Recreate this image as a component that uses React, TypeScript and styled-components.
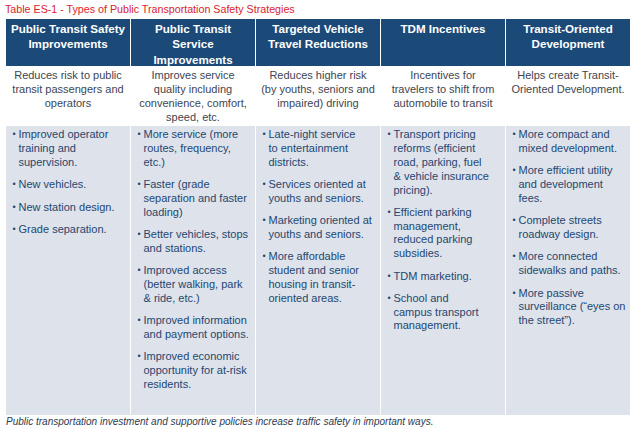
import React from "react";
import styled, { createGlobalStyle } from "styled-components";

const Global = createGlobalStyle`
  html, body { margin: 0; padding: 0; background: #ffffff; }
  body { font-family: "Liberation Sans", Arial, sans-serif; }
`;

const Page = styled.div`
  width: 640px;
  height: 429px;
  padding: 0 6px;
  box-sizing: border-box;
  overflow: hidden;
`;

const Title = styled.div`
  padding-top: 2px;
  margin-left: -1px;
  font-size: 10.7px;
  line-height: 14px;
  color: #d8242c;
  white-space: nowrap;
`;

const Table = styled.div`
  margin-top: 3px;
  display: grid;
  grid-template-columns: repeat(5, 1fr);
  grid-template-rows: 47px 60px 289px;
  column-gap: 1px;
  width: 624px;
  background: #ffffff;
`;

const HeadCell = styled.div`
  background: #1c4a78;
  color: #ffffff;
  font-weight: bold;
  font-size: 11.6px;
  line-height: 15.5px;
  text-align: center;
  padding-top: 1.5px;
  white-space: nowrap;
`;

const DescCell = styled.div`
  background: #ffffff;
  color: #3e4552;
  font-size: 11px;
  line-height: 13.7px;
  text-align: center;
  padding-top: 3.4px;
  white-space: nowrap;
`;

const BodyCell = styled.div`
  background: #dee2eb;
  padding: 2.4px 4px 0 6.5px;
  display: flex;
  flex-direction: column;
  gap: 8.5px;
`;

const Item = styled.div`
  display: flex;
  color: #24476f;
  font-size: 11px;
  line-height: 13.8px;
  white-space: nowrap;
`;

const Dot = styled.span`
  flex: 0 0 6px;
  font-size: 9px;
`;

const Footer = styled.div`
  margin-top: 1px;
  font-style: italic;
  font-size: 10px;
  line-height: 12px;
  color: #2d3a52;
  white-space: nowrap;
`;

const Lines: React.FC<{ lines: string[] }> = ({ lines }) => (
  <>
    {lines.map((l, i) => (
      <React.Fragment key={i}>
        {i > 0 && <br />}
        {l}
      </React.Fragment>
    ))}
  </>
);

const heads: string[][] = [
  ["Public Transit Safety", "Improvements"],
  ["Public Transit", "Service", "Improvements"],
  ["Targeted Vehicle", "Travel Reductions"],
  ["TDM Incentives"],
  ["Transit-Oriented", "Development"],
];

const descs: string[][] = [
  ["Reduces risk to public", "transit passengers and", "operators"],
  ["Improves service", "quality including", "convenience, comfort,", "speed, etc."],
  ["Reduces higher risk", "(by youths, seniors and", "impaired) driving"],
  ["Incentives for", "travelers to shift from", "automobile to transit"],
  ["Helps create Transit-", "Oriented Development."],
];

const bullets: string[][][] = [
  [
    ["Improved operator", "training and", "supervision."],
    ["New vehicles."],
    ["New station design."],
    ["Grade separation."],
  ],
  [
    ["More service (more", "routes, frequency,", "etc.)"],
    ["Faster (grade", "separation and faster", "loading)"],
    ["Better vehicles, stops", "and stations."],
    ["Improved access", "(better walking, park", "& ride, etc.)"],
    ["Improved information", "and payment options."],
    ["Improved economic", "opportunity for at-risk", "residents."],
  ],
  [
    ["Late-night service", "to entertainment", "districts."],
    ["Services oriented at", "youths and seniors."],
    ["Marketing oriented at", "youths and seniors."],
    ["More affordable", "student and senior", "housing in transit-", "oriented areas."],
  ],
  [
    ["Transport pricing", "reforms (efficient", "road, parking, fuel", "& vehicle insurance", "pricing)."],
    ["Efficient parking", "management,", "reduced parking", "subsidies."],
    ["TDM marketing."],
    ["School and", "campus transport", "management."],
  ],
  [
    ["More compact and", "mixed development."],
    ["More efficient utility", "and development", "fees."],
    ["Complete streets", "roadway design."],
    ["More connected", "sidewalks and paths."],
    ["More passive", "surveillance (\u201Ceyes on", "the street\u201D)."],
  ],
];

export default function App() {
  return (
    <Page>
      <Global />
      <Title>Table ES-1 - Types of Public Transportation Safety Strategies</Title>
      <Table>
        {heads.map((h, i) => (
          <HeadCell key={"h" + i}>
            <Lines lines={h} />
          </HeadCell>
        ))}
        {descs.map((d, i) => (
          <DescCell key={"d" + i}>
            <Lines lines={d} />
          </DescCell>
        ))}
        {bullets.map((col, i) => (
          <BodyCell key={"b" + i}>
            {col.map((it, j) => (
              <Item key={j}>
                <Dot>•</Dot>
                <span>
                  <Lines lines={it} />
                </span>
              </Item>
            ))}
          </BodyCell>
        ))}
      </Table>
      <Footer>
        Public transportation investment and supportive policies increase traffic safety in important ways.
      </Footer>
    </Page>
  );
}
